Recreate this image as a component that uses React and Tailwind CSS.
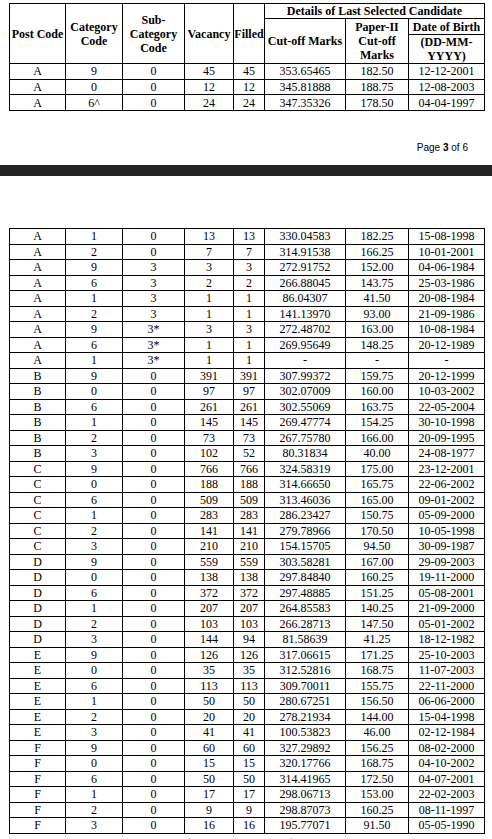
const topRows = [
  ["A", "9", "0", "45", "45", "353.65465", "182.50", "12-12-2001"],
  ["A", "0", "0", "12", "12", "345.81888", "188.75", "12-08-2003"],
  ["A", "6^", "0", "24", "24", "347.35326", "178.50", "04-04-1997"],
];

const rows = [
  ["A", "1", "0", "13", "13", "330.04583", "182.25", "15-08-1998"],
  ["A", "2", "0", "7", "7", "314.91538", "166.25", "10-01-2001"],
  ["A", "9", "3", "3", "3", "272.91752", "152.00", "04-06-1984"],
  ["A", "6", "3", "2", "2", "266.88045", "143.75", "25-03-1986"],
  ["A", "1", "3", "1", "1", "86.04307", "41.50", "20-08-1984"],
  ["A", "2", "3", "1", "1", "141.13970", "93.00", "21-09-1986"],
  ["A", "9", "3*", "3", "3", "272.48702", "163.00", "10-08-1984"],
  ["A", "6", "3*", "1", "1", "269.95649", "148.25", "20-12-1989"],
  ["A", "1", "3*", "1", "1", "-", "-", "-"],
  ["B", "9", "0", "391", "391", "307.99372", "159.75", "20-12-1999"],
  ["B", "0", "0", "97", "97", "302.07009", "160.00", "10-03-2002"],
  ["B", "6", "0", "261", "261", "302.55069", "163.75", "22-05-2004"],
  ["B", "1", "0", "145", "145", "269.47774", "154.25", "30-10-1998"],
  ["B", "2", "0", "73", "73", "267.75780", "166.00", "20-09-1995"],
  ["B", "3", "0", "102", "52", "80.31834", "40.00", "24-08-1977"],
  ["C", "9", "0", "766", "766", "324.58319", "175.00", "23-12-2001"],
  ["C", "0", "0", "188", "188", "314.66650", "165.75", "22-06-2002"],
  ["C", "6", "0", "509", "509", "313.46036", "165.00", "09-01-2002"],
  ["C", "1", "0", "283", "283", "286.23427", "150.75", "05-09-2000"],
  ["C", "2", "0", "141", "141", "279.78966", "170.50", "10-05-1998"],
  ["C", "3", "0", "210", "210", "154.15705", "94.50", "30-09-1987"],
  ["D", "9", "0", "559", "559", "303.58281", "167.00", "29-09-2003"],
  ["D", "0", "0", "138", "138", "297.84840", "160.25", "19-11-2000"],
  ["D", "6", "0", "372", "372", "297.48885", "151.25", "05-08-2001"],
  ["D", "1", "0", "207", "207", "264.85583", "140.25", "21-09-2000"],
  ["D", "2", "0", "103", "103", "266.28713", "147.50", "05-01-2002"],
  ["D", "3", "0", "144", "94", "81.58639", "41.25", "18-12-1982"],
  ["E", "9", "0", "126", "126", "317.06615", "171.25", "25-10-2003"],
  ["E", "0", "0", "35", "35", "312.52816", "168.75", "11-07-2003"],
  ["E", "6", "0", "113", "113", "309.70011", "155.75", "22-11-2000"],
  ["E", "1", "0", "50", "50", "280.67251", "156.50", "06-06-2000"],
  ["E", "2", "0", "20", "20", "278.21934", "144.00", "15-04-1998"],
  ["E", "3", "0", "41", "41", "100.53823", "46.00", "02-12-1984"],
  ["F", "9", "0", "60", "60", "327.29892", "156.25", "08-02-2000"],
  ["F", "0", "0", "15", "15", "320.17766", "168.75", "04-10-2002"],
  ["F", "6", "0", "50", "50", "314.41965", "172.50", "04-07-2001"],
  ["F", "1", "0", "17", "17", "298.06713", "153.00", "22-02-2003"],
  ["F", "2", "0", "9", "9", "298.87073", "160.25", "08-11-1997"],
  ["F", "3", "0", "16", "16", "195.77071", "91.50", "05-05-1990"],
];

function Cols() {
  return (
    <colgroup>
      <col className="w-[56px]" />
      <col className="w-[57px]" />
      <col className="w-[62px]" />
      <col className="w-[49px]" />
      <col className="w-[31px]" />
      <col className="w-[81px]" />
      <col className="w-[63px]" />
      <col className="w-[76px]" />
    </colgroup>
  );
}

function Body({ data, h }) {
  return (
    <tbody>
      {data.map((r, i) => (
        <tr key={i} className={h}>
          {r.map((c, j) => (
            <td key={j} className="border border-black p-0 text-center leading-none">
              {c}
            </td>
          ))}
        </tr>
      ))}
    </tbody>
  );
}

const th = "border border-black p-0 text-center font-bold leading-[14px]";

export default function App() {
  return (
    <div className="h-[839px] w-[492px] overflow-hidden bg-white text-black font-['Liberation_Serif',serif] text-[12px]">
      <div className="pl-[9px] pt-[3px]">
        <table className="w-[475px] table-fixed border-collapse">
          <Cols />
          <thead>
            <tr className="h-[14px]">
              <th rowSpan={3} className={th}>Post Code</th>
              <th rowSpan={3} className={th}>Category<br />Code</th>
              <th rowSpan={3} className={th}>Sub-<br />Category<br />Code</th>
              <th rowSpan={3} className={th}>Vacancy</th>
              <th rowSpan={3} className={th}>Filled</th>
              <th colSpan={3} className={th}>Details of Last Selected Candidate</th>
            </tr>
            <tr className="h-[16px]">
              <th rowSpan={2} className={th}>Cut-off Marks</th>
              <th rowSpan={2} className={th}>Paper-II<br />Cut-off<br />Marks</th>
              <th className={th}>Date of Birth</th>
            </tr>
            <tr className="h-[28px]">
              <th className={th}>(DD-MM-<br />YYYY)</th>
            </tr>
          </thead>
          <Body data={topRows} h="h-[15.7px]" />
        </table>
      </div>

      <div className="mt-[31px] flex justify-end pr-[24px] font-['Liberation_Sans',Arial,sans-serif] text-[10px] leading-[12px]">
        <span>
          Page <b>3</b> of 6
        </span>
      </div>

      <div className="mt-[11px] h-[11px] bg-[#232323]" />

      <div className="pl-[9px] pt-[52px]">
        <table className="w-[475px] table-fixed border-collapse">
          <Cols />
          <Body data={rows} h="h-[15.5px]" />
        </table>
        <div className="mt-[2px] flex gap-[40px] pl-[4px] text-[11px] leading-[12px] text-[#9a9a9a]">
          <span>^ Indicates vacancies</span>
          <span>reserved for PwBD candidates of the</span>
        </div>
      </div>
    </div>
  );
}
